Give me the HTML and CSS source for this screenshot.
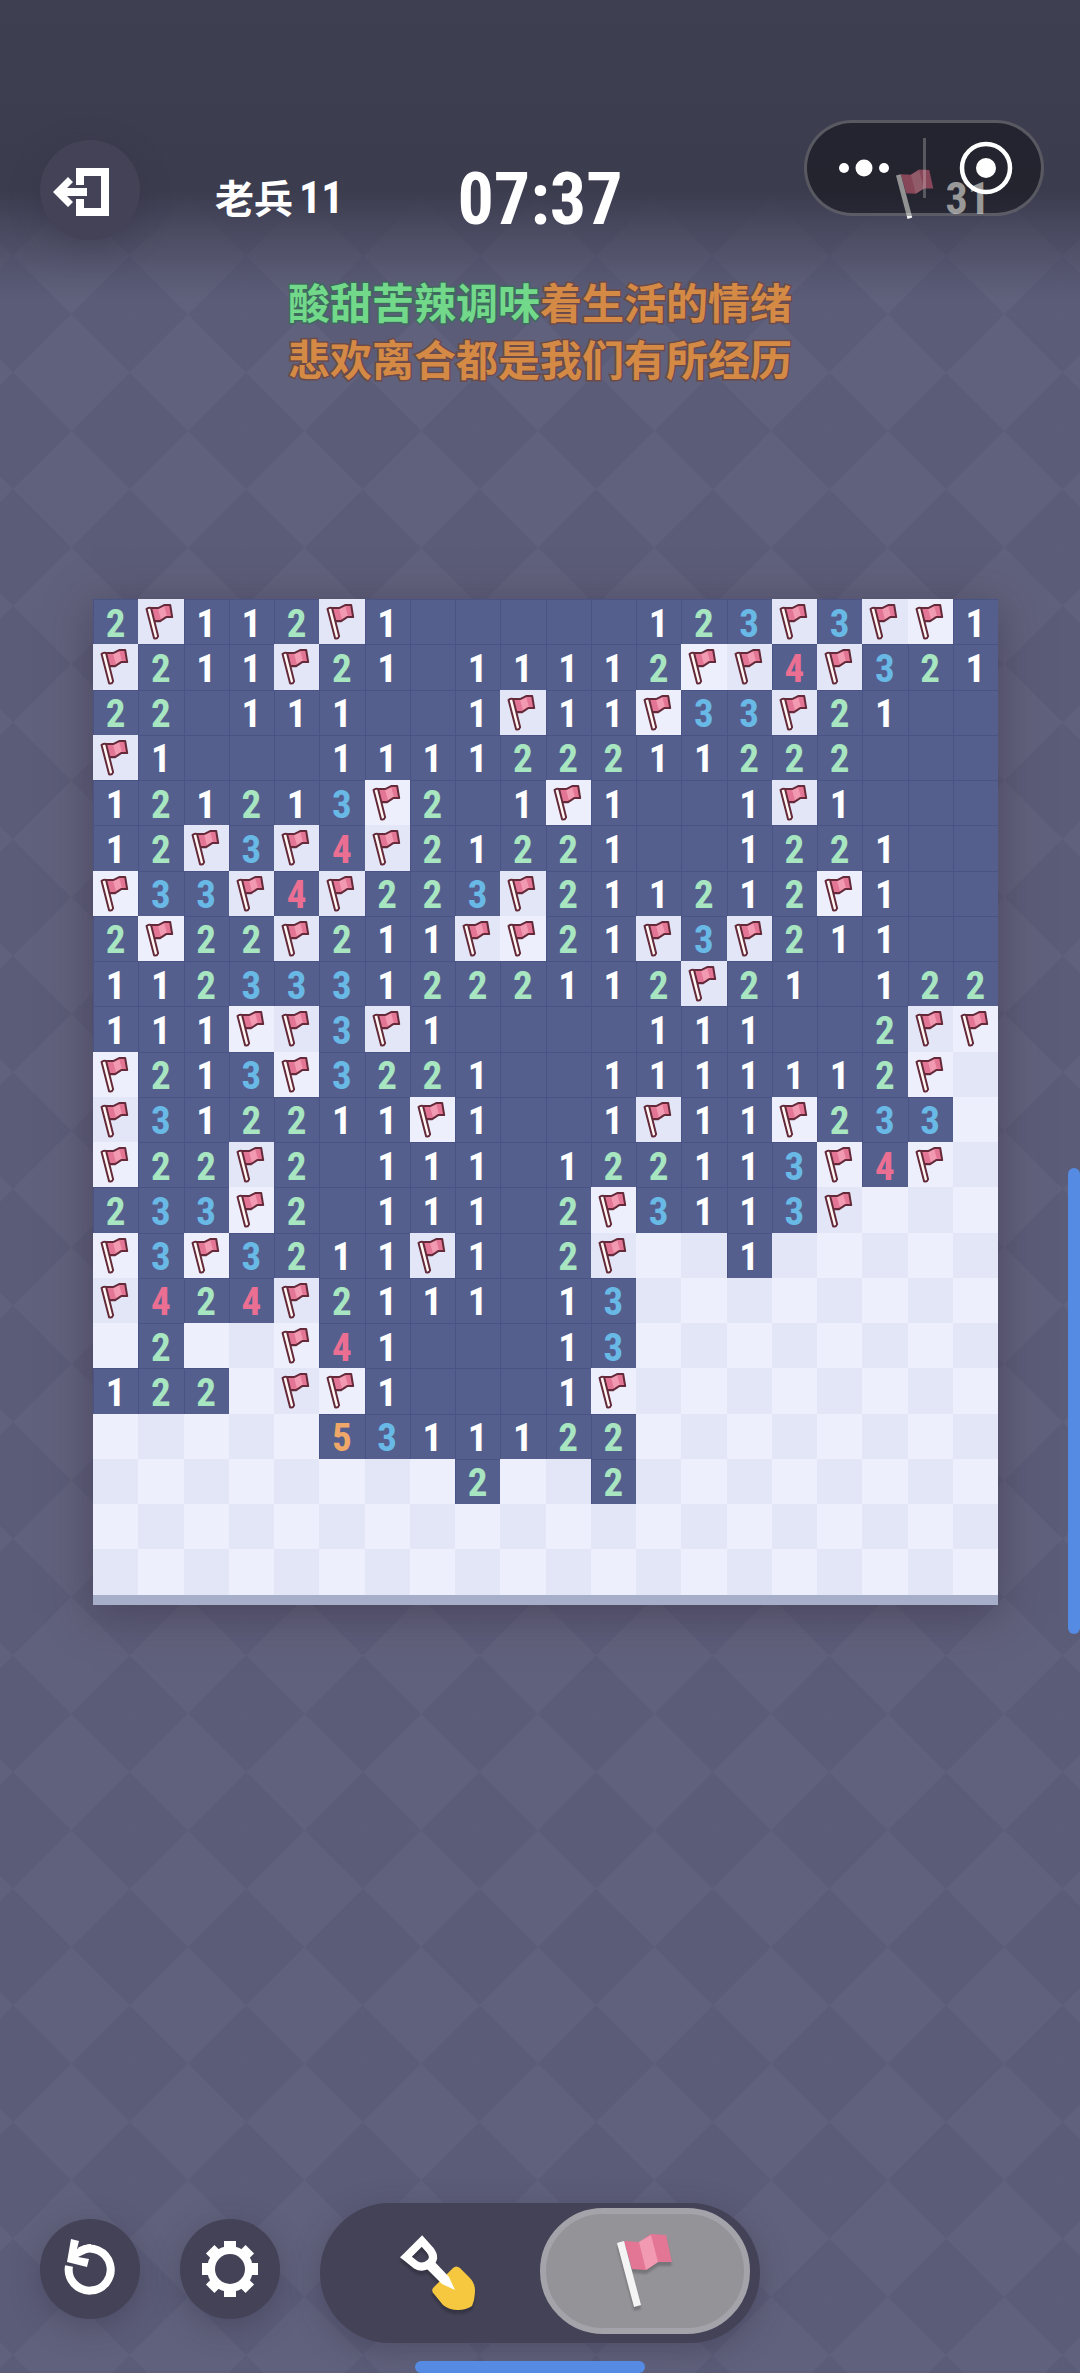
FILE: index.html
```html
<!DOCTYPE html>
<html lang="zh-CN">
<head>
    <meta charset="UTF-8">
    <meta name="viewport" content="width=device-width, initial-scale=1.0">
    <title>扫雷</title>
    <link rel="stylesheet" href="styles.css">
</head>
<body>
    <svg class="sprites" aria-hidden="true">
        <symbol id="flag-outline" viewBox="0 0 45 45">
            <path d="M13 9l7 1 6-4 6 0 2 11-6 1-6 4-6-1z" fill="#e37595"/>
            <path d="M20 10l6-3 3 11-6 3z" fill="#f29ab1"/>
            <path d="M13 9l7 0 6-3 6 0 2 12-6 0-6 4-6 0" fill="none" stroke="#642a3a" stroke-width="2" stroke-linejoin="round"/>
            <path d="M8.500 10q2-2 4.500-1l7 28q-1 3-4 2z" fill="#fff7f4" stroke="#642a3a" stroke-width="2" stroke-linejoin="round"/>
        </symbol>
        <symbol id="flag" viewBox="0 0 56 74">
            <path d="M7 7l15 1 12-8 15 1 6 27-14 0-12 8-14-1z" fill="#e37595"/>
            <path d="M22 8l12-7 7 27-12 8z" fill="#f29ab1"/>
            <path d="M0 9l7-2 17 64-7 2z" fill="#f5f4f5"/>
        </symbol>
    </svg>

    <header class="topbar">
        <div class="topbar-left">
            <button class="round-btn exit-btn" type="button" aria-label="退出">
                <svg width="60" height="50" viewBox="0 0 60 50">
                    <path d="M25 18V5h25v40H25V32" fill="none" stroke="#fff" stroke-width="8"/>
                    <path d="M-2 25L13 10l5 5-6 6h20v8H12l6 6-5 5z" fill="#fff"/>
                </svg>
            </button>
            <div class="rank">老兵 <span class="rank-level">11</span></div>
        </div>
        <time class="timer">07:37</time>
        <div class="flags-left">
            <svg width="38" height="51"><use href="#flag"/></svg>
            <span>31</span>
        </div>
        <div class="capsule">
            <button type="button" aria-label="更多">
                <svg width="60" height="60" viewBox="0 0 60 60" fill="#fff">
                    <circle cx="9" cy="30" r="5"/><circle cx="29" cy="30" r="8.5"/><circle cx="49" cy="30" r="5"/>
                </svg>
            </button>
            <button type="button" aria-label="关闭">
                <svg width="60" height="60" viewBox="0 0 60 60">
                    <circle cx="33" cy="30" r="24" fill="none" stroke="#fff" stroke-width="4.500"/>
                    <circle cx="33" cy="30" r="10" fill="#fff"/>
                </svg>
            </button>
        </div>
    </header>

    <div class="lyrics">
        <p><span class="sung">酸甜苦辣调味</span>着生活的情绪</p>
        <p>悲欢离合都是我们有所经历</p>
    </div>

    <main class="board" id="board"></main>

    <footer class="toolbar">
        <button class="round-btn" type="button" aria-label="重新开始">
            <svg width="60" height="60" viewBox="0 0 60 60">
                <path d="M9 27A21 21 0 1 0 20 12" fill="none" stroke="#fff" stroke-width="8"/>
                <path d="M11 0l8 2-2 8q8-5 14-5l0 7-13 6 11 2-2 8-20-5z" fill="#fff"/>
            </svg>
        </button>
        <button class="round-btn" type="button" aria-label="设置">
            <svg width="56" height="56" viewBox="0 0 56 56">
                <g fill="#fff">
                    <path d="M22 0h12v56H22z"/>
                    <path d="M22 0h12v56H22z" transform="rotate(45 28 28)"/>
                    <path d="M22 0h12v56H22z" transform="rotate(90 28 28)"/>
                    <path d="M22 0h12v56H22z" transform="rotate(135 28 28)"/>
                    <circle cx="28" cy="28" r="23"/>
                </g>
                <circle cx="28" cy="28" r="15" fill="#434256"/>
            </svg>
        </button>
        <div class="mode-switch">
            <button class="mode" type="button" aria-label="挖开" aria-pressed="false">
                <svg width="76" height="76" viewBox="0 0 76 76">
                    <path d="M36 55l20-20q3-3 7 0l9 9q6 6 6 13 0 9-3 16-6 4-14 4-9 0-15-5L37 61q-3-3-1-6z" fill="#f5c83f"/>
                    <path d="M9 24L25 8l8 9q6 8 0 13-7 6-14 2z" fill="none" stroke="#fff" stroke-width="8"/>
                    <path d="M36 27l16 17 6 13-13-6-16-16z" fill="#fff"/>
                </svg>
            </button>
            <button class="mode active" type="button" aria-label="插旗" aria-pressed="true">
                <svg width="56" height="74"><use href="#flag"/></svg>
            </button>
        </div>
    </footer>

    <div class="edge-handle side"></div>
    <div class="edge-handle bottom"></div>

    <script>
        // F = 旗子, . = 空白, # = 未翻开
        const rows = [
            '2F112F1.....123F3FF1',
            'F211F21.11112FF4F321',
            '22.111..1F11F33F21..',
            'F1...111122211222...',
            '121213F2.1F1..1F1...',
            '12F3F4F21221..1221..',
            'F33F4F223F211212F1..',
            '2F22F211FF21F3F211..',
            '1123331222112F21.122',
            '111FF3F1....111..2FF',
            'F213F3221..1111112F#',
            'F312211F1..1F11F233#',
            'F22F2.111.122113F4F#',
            '233F2.111.2F3113F###',
            'F3F3211F1.2F##1#####',
            'F424F2111.13########',
            '#2##F41...13########',
            '122#FF1...1F########',
            '#####5311122########',
            '########2##2########',
            '####################',
            '####################'
        ];

        const board = document.getElementById('board');

        rows.forEach((row, y) => {
            [...row].forEach((c, x) => {
                const cell = document.createElement('button');
                cell.type = 'button';
                cell.className = 'cell';
                if (c === 'F' || c === '#') {
                    cell.classList.add((x + y) % 2 ? 'closed-b' : 'closed-a');
                    cell.setAttribute('aria-label', c === 'F' ? '旗子' : '未翻开');
                    if (c === 'F') cell.innerHTML = '<svg viewBox="0 0 45 45"><use href="#flag-outline"/></svg>';
                } else {
                    cell.classList.add('open');
                    if (c === '.') {
                        cell.setAttribute('aria-label', '空白');
                    } else {
                        cell.classList.add('n' + c);
                        cell.textContent = c;
                    }
                }
                board.appendChild(cell);
            });
        });
    </script>
</body>
</html>
```
FILE: styles.css
```css
* {
    box-sizing: border-box;
}

body {
    margin: 0;
    min-height: 100vh;
    display: flex;
    flex-direction: column;
    position: relative;
    overflow-x: hidden;
    color: #fff;
    font-family: "Roboto Condensed", Roboto, "Noto Sans CJK SC", sans-serif;
    font-weight: bold;
    background-color: #60617c;
    background-image:
        linear-gradient(#3f3f52, #3c3c4f 190px, rgba(60, 60, 79, 0.5) 240px, rgba(60, 60, 79, 0) 300px),
        linear-gradient(45deg, #5b5c78 25%, transparent 25%, transparent 75%, #5b5c78 75%),
        linear-gradient(-45deg, #5b5c78 25%, transparent 25%, transparent 75%, #5b5c78 75%);
    background-repeat: no-repeat, repeat, repeat;
    background-size: 100% 300px, 10.8vw 10.8vw, 10.8vw 10.8vw;
    background-position: 0 0, 13px 81px, 13px 81px;
}

button {
    border: none;
    padding: 0;
    margin: 0;
    background: none;
    color: inherit;
    font: inherit;
    cursor: pointer;
}

svg {
    display: block;
    overflow: visible;
}

.sprites {
    position: absolute;
    width: 0;
    height: 0;
}

.topbar {
    display: grid;
    grid-template-columns: 1fr auto 1fr;
    align-items: center;
    padding: 140px 40px 0;
    position: relative;
}

.topbar-left {
    display: flex;
    align-items: center;
    gap: 75px;
}

.round-btn {
    width: 100px;
    height: 100px;
    border-radius: 50%;
    background: #434256;
    box-shadow: 0 8px 30px rgba(50, 45, 65, 0.35);
    display: flex;
    justify-content: center;
    align-items: center;
    flex-shrink: 0;
}

.exit-btn {
    padding: 4px 10px 0 0;
}

.rank {
    display: flex;
    align-items: baseline;
    gap: 6px;
    padding-top: 18px;
    font-size: 39px;
    line-height: 60px;
}

.rank-level,
.flags-left {
    font-size: 44px;
    line-height: 60px;
}

.timer {
    padding-top: 20px;
    font-size: 72px;
    line-height: 80px;
}

.flags-left {
    display: flex;
    justify-content: flex-end;
    align-items: center;
    gap: 12px;
    padding-top: 18px;
    margin-right: 50px;
}

.flags-left svg {
    margin-bottom: 10px;
}

.capsule {
    position: absolute;
    top: 120px;
    right: 36px;
    width: 240px;
    height: 96px;
    display: flex;
    align-items: center;
    background: rgba(0, 0, 0, 0.4);
    border: 3px solid rgba(255, 255, 255, 0.24);
    border-radius: 48px;
}

.capsule button {
    flex: 1;
    height: 60px;
    display: flex;
    justify-content: center;
    align-items: center;
}

.capsule button + button {
    border-left: 3px solid rgba(255, 255, 255, 0.24);
}

.lyrics {
    margin-top: 32px;
    text-align: center;
    font-family: "Noto Sans CJK SC", sans-serif;
    font-size: 42px;
    line-height: 57px;
    color: #d48a45;
    -webkit-text-stroke: 3px #6b4a4a;
    paint-order: stroke fill;
}

.lyrics p {
    margin: 0;
}

.sung {
    color: #72d98b;
    -webkit-text-stroke-color: #3f6a5e;
}

.board {
    margin: 213px 82px 60px 93px;
    display: grid;
    grid-template-columns: repeat(20, 1fr);
    border-bottom: 10px solid #a6aec9;
    background: #e3e6f6;
    box-shadow: 0 8px 40px rgba(60, 50, 70, 0.55);
}

.cell {
    aspect-ratio: 1;
    min-width: 0;
    display: flex;
    justify-content: center;
    align-items: center;
    font-size: 39px;
    line-height: 40px;
}

.cell svg {
    width: 100%;
    height: 100%;
}

.open {
    padding-top: 4px;
    background: #555f8e;
    box-shadow: inset 1px 1px 0 #4a5386;
}

.closed-a {
    background: #edf0fc;
}

.closed-b {
    background: #e2e6f6;
}

.n2 {
    color: #a7e6c0;
}

.n3 {
    color: #69b9e6;
}

.n4 {
    color: #eb6f92;
}

.n5 {
    color: #f0a868;
}

.toolbar {
    margin-top: auto;
    padding: 0 40px 30px;
    display: flex;
    align-items: center;
    gap: 40px;
}

.toolbar .round-btn {
    margin-bottom: 8px;
}

.mode-switch {
    display: flex;
    width: 440px;
    height: 140px;
    padding: 5px 10px 9px;
    border-radius: 70px;
    background: #434256;
    box-shadow: 0 8px 30px rgba(50, 45, 65, 0.35);
}

.mode {
    width: 50%;
    display: flex;
    justify-content: center;
    align-items: center;
    border-radius: 63px;
}

.mode svg {
    filter: drop-shadow(0 4px 1px rgba(0, 0, 0, 0.2));
}

.mode.active {
    background: #949398;
    border: 6px solid #a4a3aa;
}

.edge-handle {
    position: fixed;
    background: #558be2;
}

.edge-handle.side {
    right: 0;
    top: 1168px;
    width: 12px;
    height: 466px;
    border-radius: 6px;
}

.edge-handle.bottom {
    left: 415px;
    bottom: 0;
    width: 230px;
    height: 12px;
    border-radius: 6px;
}
```
